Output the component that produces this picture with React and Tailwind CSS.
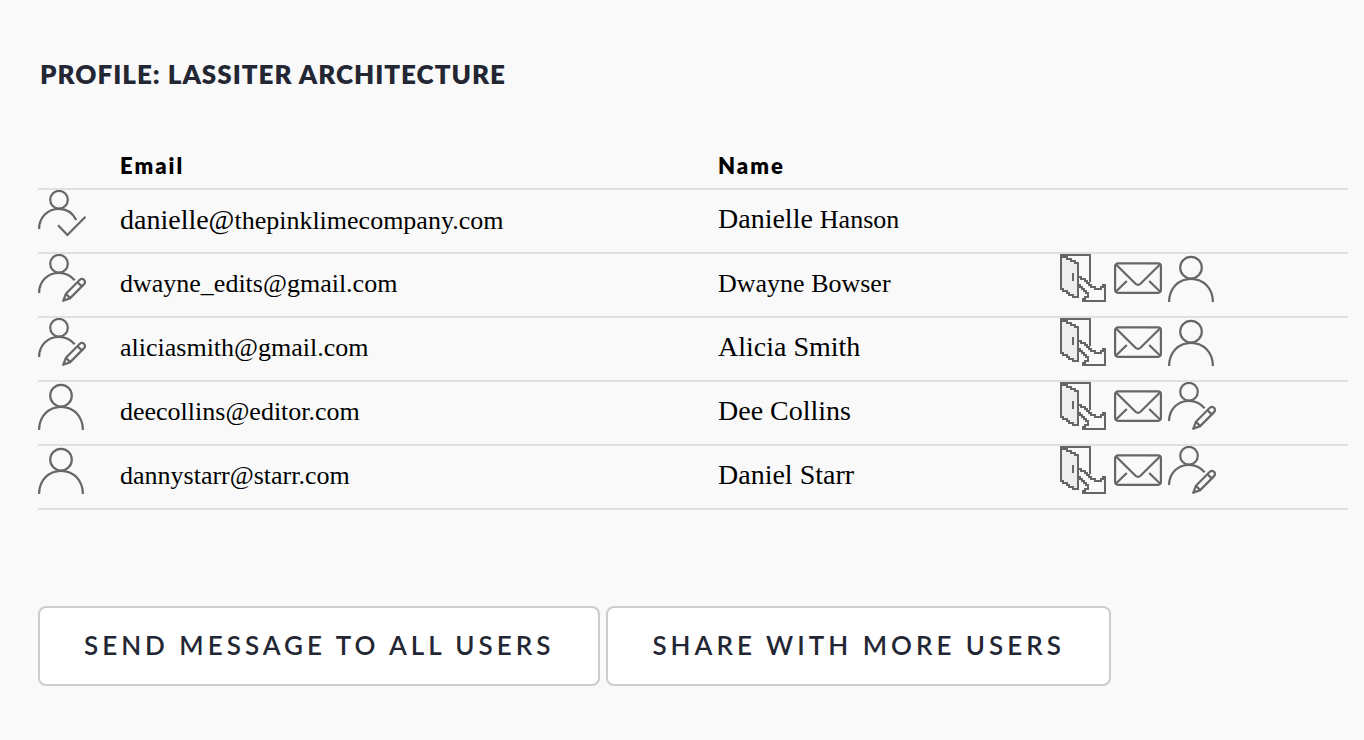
const stroke = {
  fill: 'none',
  stroke: '#666666',
  strokeWidth: 2.2,
}

function Icon({ children }) {
  return (
    <svg viewBox="0 0 48 48" className="block size-12" aria-hidden="true" {...stroke}>
      {children}
    </svg>
  )
}

function UserCheckIcon() {
  return (
    <Icon>
      <circle cx="21" cy="9.7" r="8.8" />
      <path d="M1.1 39C1.100 27.500 9.700 18.800 21 18.800C28.500 18.800 34.800 23 38.300 30" />
      <path d="M20 35.300L29.400 45L47.500 26.800" />
    </Icon>
  )
}

function UserEditIcon() {
  return (
    <Icon>
      <circle cx="21" cy="9.7" r="8.8" />
      <path d="M1.100 39C1.100 27.500 9.700 18.800 21 18.800C27.500 18.800 32.600 21.500 36.700 26.300" />
      <path
        strokeLinejoin="round"
        d="M25.200 46.800L27.900 39.800L41.800 25.800Q44 23.800 46 25.800Q48 28 46.100 30.100L32.200 44.100Z"
      />
      <path d="M39.500 28.200L43.800 32.400M27.900 39.800L32.200 44.100" />
    </Icon>
  )
}

function UserIcon() {
  return (
    <Icon>
      <circle cx="23" cy="13.700" r="10.800" />
      <path d="M1.100 48C1.100 34.500 10.500 24.800 23 24.800S44.900 34.500 44.900 48" />
    </Icon>
  )
}

function MailIcon() {
  return (
    <Icon>
      <rect x="1.100" y="9.300" width="45.800" height="29.500" rx="3" />
      <path d="M2 10.500L21.500 29.700Q24 32 26.500 29.700L46 10.500" />
      <path d="M2 37.500L12.800 27M46 37.500L35.200 27" />
    </Icon>
  )
}

function DoorIcon() {
  return (
    <Icon>
      <g shapeRendering="crispEdges" strokeWidth="2">
        <path fill="#eeeeee" d="M1 1V35H3V37H7V39H9V41H13V43H18V9H15V7H11V5H7V3H3V1Z" />
        <path d="M1 1H30V28" />
        <path d="M13 19V27" />
        <path d="M19 23H21V25H25V27H27V29H29V31H31V33H35V35H41V33H43V31H45V47H23V45H25V43H28V39H26V37H24V35H22V33H20V31H19" />
      </g>
    </Icon>
  )
}

const roleIcons = { owner: UserCheckIcon, editor: UserEditIcon, viewer: UserIcon }

const users = [
  {
    role: 'owner',
    email: (
      <>
        <span className="text-[28px]">danielle@</span>thepinklimecompany.com
      </>
    ),
    name: (
      <>
        Danielle <span className="text-[26px]">Hanson</span>
      </>
    ),
  },
  {
    role: 'editor',
    email: 'dwayne_edits@gmail.com',
    name: <span className="text-[26px]">Dwayne Bowser</span>,
    next: 'viewer',
  },
  { role: 'editor', email: 'aliciasmith@gmail.com', name: 'Alicia Smith', next: 'viewer' },
  { role: 'viewer', email: 'deecollins@editor.com', name: 'Dee Collins', next: 'editor' },
  { role: 'viewer', email: 'dannystarr@starr.com', name: 'Daniel Starr', next: 'editor' },
]

function IconButton({ label, children }) {
  return (
    <button type="button" aria-label={label} className="block">
      {children}
    </button>
  )
}

function UserRow({ user }) {
  const Role = roleIcons[user.role]
  const Next = user.next && roleIcons[user.next]
  return (
    <tr className="h-16 border-b-2 border-[#e0e0e0]">
      <td className="p-0 align-top">
        <Role />
      </td>
      <td className="p-0 pb-0.5 align-middle text-[26px] leading-8">{user.email}</td>
      <td className="p-0 pb-1 align-middle text-[28px] leading-8">{user.name}</td>
      <td className="p-0 align-top">
        {Next && (
          <div className="flex gap-1.5">
            <IconButton label="Remove user">
              <DoorIcon />
            </IconButton>
            <IconButton label="Send message">
              <MailIcon />
            </IconButton>
            <IconButton label="Change role">
              <Next />
            </IconButton>
          </div>
        )}
      </td>
    </tr>
  )
}

function ActionButton({ children }) {
  return (
    <button
      type="button"
      className="h-20 rounded-lg border-2 border-[#cccccc] bg-white px-11 pb-0.5 font-['Lato',sans-serif] text-[26px] font-semibold tracking-[4px] text-[#232733]"
    >
      {children}
    </button>
  )
}

export default function App() {
  return (
    <main className="min-h-screen bg-[#f9f9f9] pt-14 pr-4 pb-12 pl-[38px] text-black">
      <h1 className="pl-0.5 font-['Lato',sans-serif] text-[26px] leading-9 font-extrabold tracking-[1px] text-[#232733]">
        PROFILE: LASSITER ARCHITECTURE
      </h1>
      <table className="mt-13 w-full table-fixed border-collapse font-['Liberation_Serif',serif]">
        <colgroup>
          <col className="w-[82px]" />
          <col className="w-[598px]" />
          <col className="w-[342px]" />
          <col />
        </colgroup>
        <thead>
          <tr className="h-[45px] border-b-2 border-[#e0e0e0] text-left font-['Lato',sans-serif] text-[22px] leading-7 tracking-[2px]">
            <td className="p-0" />
            <th scope="col" className="p-0 font-extrabold">
              Email
            </th>
            <th scope="col" className="p-0 font-extrabold">
              Name
            </th>
            <td className="p-0" />
          </tr>
        </thead>
        <tbody>
          {users.map((user, index) => (
            <UserRow key={index} user={user} />
          ))}
        </tbody>
      </table>
      <div className="mt-24 flex flex-wrap gap-1.5">
        <ActionButton>SEND MESSAGE TO ALL USERS</ActionButton>
        <ActionButton>SHARE WITH MORE USERS</ActionButton>
      </div>
    </main>
  )
}
